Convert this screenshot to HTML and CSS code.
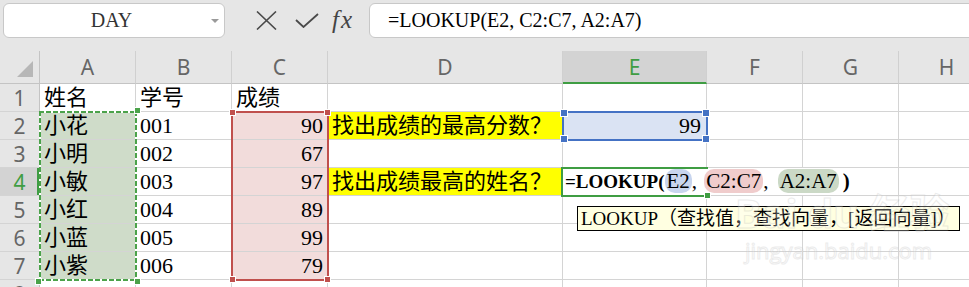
FILE: index.html
```html
<!DOCTYPE html>
<html lang="zh-CN">
<head>
    <meta charset="UTF-8">
    <title>LOOKUP</title>
    <link rel="stylesheet" href="styles.css">
</head>
<body>
    <div class="toolbar">
        <div class="namebox">
            <span class="name">DAY</span>
            <span class="caret"></span>
        </div>
        <div class="fbuttons">
            <svg class="icon-x" width="21" height="19" viewBox="0 0 21 19">
                <path d="M1 0.5 L20 18.5 M20 0.5 L1 18.5" stroke="#4a4a4a" stroke-width="1.6" fill="none"/>
            </svg>
            <svg class="icon-ok" width="24" height="15" viewBox="0 0 24 15">
                <path d="M1 7 L8.5 14 L23 1" stroke="#4a4a4a" stroke-width="1.8" fill="none"/>
            </svg>
            <span class="fx">fx</span>
        </div>
        <div class="fbar">=LOOKUP(E2, C2:C7, A2:A7)</div>
    </div>

    <div class="sheet">
        <div class="hd corner"><span class="tri"></span></div>
        <div class="hd col">A</div>
        <div class="hd col">B</div>
        <div class="hd col">C</div>
        <div class="hd col">D</div>
        <div class="hd col active">E</div>
        <div class="hd col">F</div>
        <div class="hd col">G</div>
        <div class="hd col">H</div>

        <div class="hd row">1</div>
        <div class="cell">姓名</div>
        <div class="cell">学号</div>
        <div class="cell">成绩</div>
        <div class="cell"></div>
        <div class="cell"></div>
        <div class="cell"></div>
        <div class="cell"></div>
        <div class="cell"></div>

        <div class="hd row">2</div>
        <div class="cell green">小花</div>
        <div class="cell">001</div>
        <div class="cell pink num">90</div>
        <div class="cell yellow">找出成绩的最高分数？</div>
        <div class="cell blue num">99</div>
        <div class="cell"></div>
        <div class="cell"></div>
        <div class="cell"></div>

        <div class="hd row">3</div>
        <div class="cell green">小明</div>
        <div class="cell">002</div>
        <div class="cell pink num">67</div>
        <div class="cell"></div>
        <div class="cell"></div>
        <div class="cell"></div>
        <div class="cell"></div>
        <div class="cell"></div>

        <div class="hd row active">4</div>
        <div class="cell green">小敏</div>
        <div class="cell">003</div>
        <div class="cell pink num">97</div>
        <div class="cell yellow">找出成绩最高的姓名？</div>
        <div class="cell edit">
            <span class="etext"><b>=LOOKUP(</b><span class="ref r-blue">E2</span>, <span class="ref r-red">C2:C7</span>, <span class="ref r-green">A2:A7</span><b class="close">)</b></span>
        </div>
        <div class="cell"></div>
        <div class="cell"></div>
        <div class="cell"></div>

        <div class="hd row">5</div>
        <div class="cell green">小红</div>
        <div class="cell">004</div>
        <div class="cell pink num">89</div>
        <div class="cell"></div>
        <div class="cell"></div>
        <div class="cell"></div>
        <div class="cell"></div>
        <div class="cell"></div>

        <div class="hd row">6</div>
        <div class="cell green">小蓝</div>
        <div class="cell">005</div>
        <div class="cell pink num">99</div>
        <div class="cell"></div>
        <div class="cell"></div>
        <div class="cell"></div>
        <div class="cell"></div>
        <div class="cell"></div>

        <div class="hd row">7</div>
        <div class="cell green">小紫</div>
        <div class="cell">006</div>
        <div class="cell pink num">79</div>
        <div class="cell"></div>
        <div class="cell"></div>
        <div class="cell"></div>
        <div class="cell"></div>
        <div class="cell"></div>

        <div class="hd row">8</div>
        <div class="cell"></div>
        <div class="cell"></div>
        <div class="cell"></div>
        <div class="cell"></div>
        <div class="cell"></div>
        <div class="cell"></div>
        <div class="cell"></div>
        <div class="cell"></div>

        <!-- range highlights -->
        <div class="range range-a"><span class="h tr"></span><span class="h br"></span><span class="h bl"></span></div>
        <div class="range range-c"><span class="h tl"></span><span class="h tr"></span><span class="h bl"></span><span class="h br"></span></div>
        <div class="range range-e"><span class="h tl"></span><span class="h tr"></span><span class="h bl"></span><span class="h br"></span></div>
        <div class="active-cell"><span class="h br"></span></div>

        <div class="tip">LOOKUP（查找值，查找向量，[返回向量]）</div>
    </div>

    <div class="watermark">
        <span class="wm-logo">Bai du 经验</span>
        <span class="wm-url">jingyan.baidu.com</span>
    </div>
</body>
</html>
```

FILE: styles.css
```css
body {
    margin: 0;
    width: 969px;
    height: 287px;
    overflow: hidden;
    position: relative;
    background: #e6e6e6;
    font-family: "Liberation Serif", "Noto Sans CJK SC", serif;
    color: #000;
}

/* formula toolbar */
.toolbar {
    display: flex;
    height: 38px;
    padding-top: 3px;
    box-sizing: border-box;
    margin-bottom: 13px;
}
.namebox {
    width: 222px;
    margin-left: 3px;
    height: 35px;
    box-sizing: border-box;
    background: #fff;
    border: 1px solid #c8c8c8;
    border-radius: 6px;
    display: flex;
    align-items: center;
    padding-right: 5px;
}
.name {
    flex: 1;
    text-align: center;
    font-size: 20px;
    color: #333;
    padding-left: 8px;
}
.caret {
    width: 0;
    height: 0;
    border-left: 4px solid transparent;
    border-right: 4px solid transparent;
    border-top: 4px solid #9a9a9a;
}
.fbuttons {
    width: 144px;
    display: flex;
    align-items: center;
}
.icon-x {
    margin-left: 31px;
}
.icon-ok {
    margin-left: 18px;
}
.fx {
    margin-left: 13px;
    font-style: italic;
    font-size: 25px;
    letter-spacing: 2px;
    color: #444;
    line-height: 1;
    margin-top: -3px;
}
.fbar {
    flex: 1;
    margin-right: -10px;
    height: 35px;
    box-sizing: border-box;
    background: #fff;
    border: 1px solid #c8c8c8;
    border-radius: 6px;
    padding-left: 18px;
    font-size: 20px;
    display: flex;
    align-items: center;
    white-space: nowrap;
}

/* sheet grid */
.sheet {
    display: grid;
    grid-template-columns: 40px 96px 96px 96px 235px 144px 96px 96px 96px;
    grid-template-rows: 33px;
    grid-auto-rows: 28px;
    position: relative;
}
.hd {
    background: #e6e6e6;
    box-sizing: border-box;
    font-family: "Noto Sans", sans-serif;
    font-size: 21px;
    color: #666;
    display: flex;
    align-items: center;
    justify-content: center;
}
.col {
    border-right: 1px solid #d0d0d0;
    border-bottom: 1px solid #c4c4c4;
}
.col.active {
    background: #d3d3d3;
    color: #3f9d43;
    border-bottom: 2px solid #3f9d43;
}
.row {
    border-right: 1px solid #c4c4c4;
    border-bottom: 1px solid #d4d4d4;
}
.row.active {
    background: #d3d3d3;
    color: #3f9d43;
    box-shadow: inset -2px 0 0 #3f9d43;
}
.corner {
    border-right: 1px solid #c4c4c4;
    border-bottom: 1px solid #c4c4c4;
    justify-content: flex-end;
    align-items: flex-end;
    padding: 0 6px 6px 0;
}
.tri {
    width: 0;
    height: 0;
    border-left: 16px solid transparent;
    border-bottom: 16px solid #b7b7b7;
}
.cell {
    background: #fff;
    box-sizing: border-box;
    border-right: 1px solid #d4d4d4;
    border-bottom: 1px solid #d4d4d4;
    font-size: 22px;
    line-height: 26px;
    padding: 0 3px 0 4px;
    display: flex;
    align-items: flex-end;
    white-space: nowrap;
}
.num {
    justify-content: flex-end;
}
.green {
    background: #cfdcc9;
}
.pink {
    background: #f2dcdb;
    padding-right: 4px;
}
.yellow {
    background: #ffff00;
    padding-left: 4px;
}
.blue {
    background: #dae3f3;
    padding-right: 5px;
}

/* cell in edit mode */
.edit {
    position: relative;
    z-index: 2;
    padding-left: 2px;
    overflow: visible;
}
.etext {
    background: #fff;
    padding-right: 4px;
    line-height: 26px;
    font-size: 21px;
}
.etext b {
    font-weight: bold;
    font-size: 19px;
}
.etext .close {
    font-size: 21px;
    margin-left: 4px;
}
.ref {
    display: inline-block;
    line-height: 24px;
    padding: 0 2px;
    border-radius: 10px;
}
.r-blue {
    background: #c8d5ee;
}
.r-red {
    background: #f0cccc;
    margin-left: 2px;
}
.r-green {
    background: #cbd9c6;
    margin-left: 4px;
}

/* reference ranges */
.range {
    position: absolute;
    inset: -1px;
    z-index: 3;
}
.range-a {
    grid-column: 2 / 3;
    grid-row: 3 / 9;
    background:
        repeating-linear-gradient(90deg, #4ba24a 0 5px, #fff 5px 7px) top left / 100% 2px no-repeat,
        repeating-linear-gradient(90deg, #4ba24a 0 5px, #fff 5px 7px) bottom left / 100% 2px no-repeat,
        repeating-linear-gradient(180deg, #4ba24a 0 5px, #fff 5px 7px) top left / 2px 100% no-repeat,
        repeating-linear-gradient(180deg, #4ba24a 0 5px, #fff 5px 7px) top right / 2px 100% no-repeat;
}
.range-a .h {
    background: #4ba24a;
}
.range-c {
    grid-column: 4 / 5;
    grid-row: 3 / 9;
    border: 2px solid #c0504d;
}
.range-c .h {
    background: #c0504d;
}
.range-e {
    grid-column: 6 / 7;
    grid-row: 3 / 4;
    border: 2px solid #4472c4;
}
.range-e .h {
    background: #4472c4;
    width: 6px;
    height: 6px;
}
.h {
    position: absolute;
    width: 5px;
    height: 5px;
    border: 1px solid #fff;
}
.h.tl { left: -4px; top: -4px; }
.h.tr { right: -4px; top: -4px; }
.h.bl { left: -4px; bottom: -4px; }
.h.br { right: -4px; bottom: -4px; }

.active-cell {
    position: absolute;
    grid-column: 6 / 7;
    grid-row: 5 / 6;
    inset: -1px -1px -1px -2px;
    border: 2px solid #3f9d43;
    border-right: none;
    z-index: 3;
}
.active-cell .h {
    background: #3f9d43;
    right: -3px;
    bottom: -4px;
}

/* function hint */
.tip {
    position: absolute;
    grid-column: 6 / 10;
    grid-row: 6 / 7;
    left: 14px;
    top: 10px;
    height: 25px;
    box-sizing: border-box;
    background: #ffffe1;
    border: 1px solid #000;
    padding: 0 3px;
    font-size: 19px;
    line-height: 23px;
    white-space: nowrap;
    z-index: 4;
}

/* faint site watermark */
.watermark {
    position: absolute;
    left: 735px;
    top: 188px;
    z-index: 5;
    display: flex;
    flex-direction: column;
    opacity: 0.35;
    pointer-events: none;
}
.wm-logo {
    font-family: "Noto Sans", "Noto Sans CJK SC", sans-serif;
    font-weight: bold;
    font-size: 40px;
    line-height: 50px;
    color: rgba(255, 255, 255, 0.8);
    -webkit-text-stroke: 1px #c8c8c8;
    white-space: nowrap;
}
.wm-url {
    font-family: "Open Sans", sans-serif;
    font-size: 22px;
    line-height: 24px;
    margin-left: 10px;
    color: rgba(255, 255, 255, 0.8);
    -webkit-text-stroke: 1px #c8c8c8;
}
```
